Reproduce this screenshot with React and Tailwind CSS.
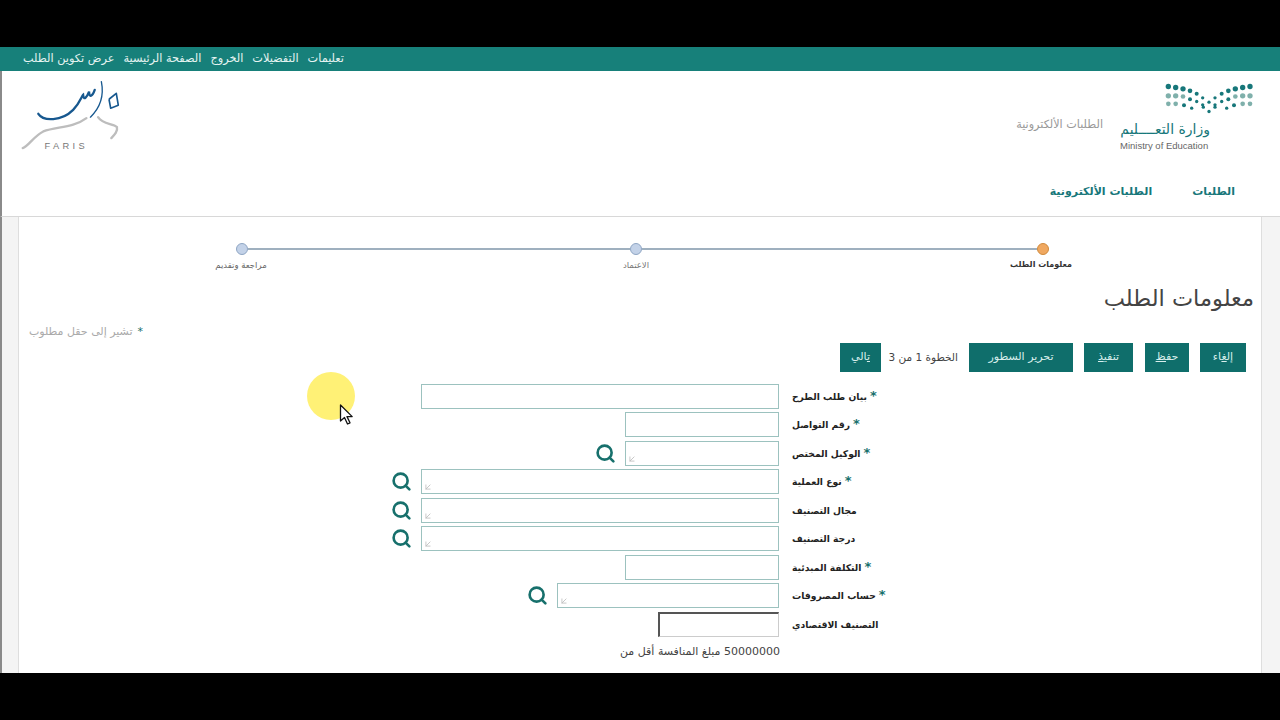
import React from "react";
import { Search, ArrowDownLeft } from "lucide-react";

const font = { fontFamily: '"DejaVu Sans", "Noto Sans", sans-serif' };

const topLinks = ["عرض تكوين الطلب", "الصفحة الرئيسية", "الخروج", "التفضيلات", "تعليمات"];

const dots = [
  [505, 50, 8, 0], [527, 53, 8, 0], [549, 57, 8, 0], [570, 63, 7, 0], [590, 72, 6, 0], [608, 84, 5, 0],
  [645, 84, 5, 0], [665, 72, 6, 0], [685, 63, 7, 0], [706, 57, 8, 0], [728, 53, 8, 0], [750, 50, 8, 0],
  [505, 78, 8, 1], [527, 78, 8, 1], [549, 80, 7, 1], [570, 88, 6, 0], [590, 95, 5, 0], [608, 105, 5, 0],
  [627, 97, 5, 0], [645, 105, 5, 0], [665, 95, 5, 0], [685, 88, 6, 0], [706, 80, 7, 1], [728, 78, 8, 1], [750, 78, 8, 1],
  [505, 102, 7, 1], [527, 102, 7, 1], [552, 106, 6, 0], [575, 115, 5, 0], [610, 112, 5, 0], [627, 125, 5, 0],
  [645, 112, 5, 0], [680, 115, 5, 0], [702, 106, 6, 0], [728, 102, 7, 1], [750, 102, 7, 1],
];

const rows = [
  { label: "بيان طلب الطرح", w: "w-[358px]", req: true },
  { label: "رقم التواصل", w: "w-[154px]", req: true },
  { label: "الوكيل المختص", w: "w-[154px]", req: true, lookup: true },
  { label: "نوع العملية", w: "w-[358px]", req: true, lookup: true },
  { label: "مجال التصنيف", w: "w-[358px]", lookup: true },
  { label: "درجة التصنيف", w: "w-[358px]", lookup: true },
  { label: "التكلفة المبدئية", w: "w-[154px]", req: true },
  { label: "حساب المصروفات", w: "w-[222px]", req: true, lookup: true },
  { label: "التصنيف الاقتصادي", w: "w-[121px]", inset: true },
];

function FarisLogo() {
  return (
    <svg width="103" height="73" viewBox="60 120 310 220" fill="none">
      <path d="M115 222C130 245 185 245 220 210C240 190 245 170 250 165C252 185 262 170 268 155C268 175 278 170 285 150" stroke="#17588f" strokeWidth="7" strokeLinecap="round" />
      <path d="M305 125C312 160 305 200 272 232" stroke="#17588f" strokeWidth="4" strokeLinecap="round" />
      <path d="M328 178L350 160L356 196L333 205L328 178" stroke="#17588f" strokeWidth="5" strokeLinejoin="round" />
      <path d="M68 325C85 320 100 290 130 275C170 260 220 265 260 235" stroke="#bdbdbd" strokeWidth="7" strokeLinecap="round" />
      <path d="M295 232C310 255 340 250 352 262C355 275 345 285 335 295" stroke="#bdbdbd" strokeWidth="7" strokeLinecap="round" />
      <text x="134" y="327" fontSize="28" letterSpacing="10" fill="#777" fontFamily="Liberation Sans, sans-serif">FARIS</text>
    </svg>
  );
}

function MinistryLogo() {
  return (
    <div className="flex flex-col items-end w-[135px]">
      <svg width="90" height="32" viewBox="495 40 270 95">
        {dots.map(([x, y, r, light], i) => (
          <circle key={i} cx={x} cy={y} r={r} fill={light ? "#7fb0ab" : "#17777a"} />
        ))}
      </svg>
      <div className="flex flex-col w-[135px] pr-[45px]">
        <div dir="rtl" className="text-[14px] leading-[18px] mt-[5px] text-[#17777a] whitespace-nowrap" style={font}>وزارة التعــــليم</div>
        <div className="text-[9.5px] leading-[12px] mt-[2px] text-[#666] whitespace-nowrap" style={{ fontFamily: '"Liberation Sans", sans-serif' }}>Ministry of Education</div>
      </div>
    </div>
  );
}

function Step({ color, border }) {
  return <div className={`w-3 h-3 rounded-full border shrink-0 ${color} ${border}`}></div>;
}

function ActionButton({ before, mark, after, className }) {
  return (
    <button dir="rtl" className={`h-[29px] bg-[#0f6e6b] text-[#d9eeec] text-[11px] whitespace-nowrap ${className}`} style={font}>
      {before}<u>{mark}</u>{after}
    </button>
  );
}

function FormRow({ label, w, req, lookup, inset }) {
  return (
    <div className="flex items-center h-[28.5px]">
      <div className="w-[760px] flex items-center justify-end">
        {lookup && <Search size={21} strokeWidth={3} className="text-[#17706c] mr-[9px]" />}
        <div className={`relative h-[25px] bg-white ${w} ${inset ? "border border-[#ccc] border-t-2 border-l-2 border-t-[#555] border-l-[#555]" : "border border-[#9cc2bf]"}`}>
          {lookup && <ArrowDownLeft size={10} strokeWidth={2} className="absolute left-[1px] bottom-[1px] text-[#bdbdbd]" />}
        </div>
      </div>
      <div className="flex items-start ml-[13px] pt-[1px]">
        <span dir="rtl" className="text-[9.2px] font-bold text-[#222] whitespace-nowrap" style={font}>{label}</span>
        {req && <span className="text-[13px] leading-[13px] ml-[3px] -mt-[1px] font-bold text-[#17706c]" style={font}>*</span>}
      </div>
    </div>
  );
}

export default function App() {
  return (
    <div className="relative w-[1280px] h-[720px] overflow-hidden bg-black flex flex-col pt-[47px] pb-[47px]">
      <div className="h-[24px] shrink-0 bg-[#17807a] flex items-center gap-[9px] pl-[23px] text-[11.3px] text-[#e6f4f2]" style={font}>
        {topLinks.map((t) => (
          <span key={t} dir="rtl" className="whitespace-nowrap">{t}</span>
        ))}
      </div>

      <div className="h-[146px] shrink-0 bg-white border-l-2 border-[#8a8a8a] border-b border-b-[#d8d8d8] flex flex-col">
        <div className="flex justify-between pl-[18px] pr-[25px] h-[101px]">
          <div className="pt-[9px]"><FarisLogo /></div>
          <div className="flex pt-[12px]">
            <div dir="rtl" className="mt-[34px] mr-[17px] text-[11.2px] text-[#999] whitespace-nowrap" style={font}>الطلبات الألكترونية</div>
            <MinistryLogo />
          </div>
        </div>
        <div className="flex justify-end gap-[40px] pr-[45px] pt-[12px] text-[11px] font-bold text-[#17777a]" style={font}>
          <span dir="rtl" className="whitespace-nowrap">الطلبات الألكترونية</span>
          <span dir="rtl" className="whitespace-nowrap">الطلبات</span>
        </div>
      </div>

      <div className="flex-1 flex border-l-2 border-[#8a8a8a] bg-[#f4f4f4] min-h-0">
        <div className="w-[16px] shrink-0"></div>
        <div className="w-[1244px] shrink-0 bg-white border-l border-r border-[#dedede] flex flex-col">
          <div className="flex items-center ml-[217px] mt-[26px]">
            <Step color="bg-[#c3d2e8]" border="border-[#8fa6c4]" />
            <div className="w-[382px] h-[2px] bg-[#9fb0bf]"></div>
            <Step color="bg-[#c3d2e8]" border="border-[#8fa6c4]" />
            <div className="w-[395px] h-[2px] bg-[#9fb0bf]"></div>
            <Step color="bg-[#f0a860]" border="border-[#d08a3c]" />
          </div>
          <div className="flex ml-[182px] mt-[4px] text-[8.5px] leading-[12px]" style={font}>
            <div dir="rtl" className="w-[80px] text-center text-[#666] whitespace-nowrap">مراجعة وتقديم</div>
            <div dir="rtl" className="w-[80px] ml-[315px] text-center text-[#777] whitespace-nowrap">الاعتماد</div>
            <div dir="rtl" className="w-[80px] ml-[325px] text-center text-[8px] font-bold text-[#333] whitespace-nowrap">معلومات الطلب</div>
          </div>

          <div dir="rtl" className="mt-[12px] pr-[7px] text-[22.5px] leading-[30px] text-[#444]" style={font}>معلومات الطلب</div>

          <div dir="rtl" className="mt-[11px] pr-[1118px] whitespace-nowrap text-[11px] leading-[16px] text-[#aaa]" style={font}>
            <span className="text-[#17706c] ml-[5px]">*</span>تشير إلى حقل مطلوب
          </div>

          <div className="flex items-center justify-end mt-[3px] pr-[15px] h-[29px]">
            <ActionButton before="" mark="ت" after="الي" className="w-[41px]" />
            <span dir="rtl" className="ml-[7px] w-[70px] text-[10.5px] text-[#444] whitespace-nowrap" style={font}>الخطوة 1 من 3</span>
            <ActionButton before="تحرير السطور" mark="" after="" className="w-[104px] ml-[11px]" />
            <ActionButton before="تنفي" mark="ذ" after="" className="w-[49px] ml-[11px]" />
            <ActionButton before="حف" mark="ظ" after="" className="w-[44px] ml-[12px]" />
            <ActionButton before="إل" mark="غ" after="اء" className="w-[46px] ml-[11px]" />
          </div>

          <div className="mt-[10px] flex flex-col">
            {rows.map((r) => (
              <FormRow key={r.label} {...r} />
            ))}
          </div>

          <div className="w-[761px] flex justify-end mt-[6px]">
            <span dir="rtl" className="text-[11px] leading-[14px] text-[#444] whitespace-nowrap" style={font}>50000000 مبلغ المنافسة أقل من</span>
          </div>
        </div>
        <div className="flex-1"></div>
      </div>

      {/* mouse highlight */}
      <div className="absolute left-[307px] top-[372px] w-[48px] h-[48px] rounded-full bg-[#fff176]"></div>
      <svg className="absolute left-[339px] top-[404px]" width="14" height="22" viewBox="0 0 14 22">
        <path d="M1.5 1v16l4-3.5 3 6.5 2.5-1.2-3-6.2h5.2z" fill="#fff" stroke="#111" strokeWidth="1.3" strokeLinejoin="round" />
      </svg>
    </div>
  );
}
